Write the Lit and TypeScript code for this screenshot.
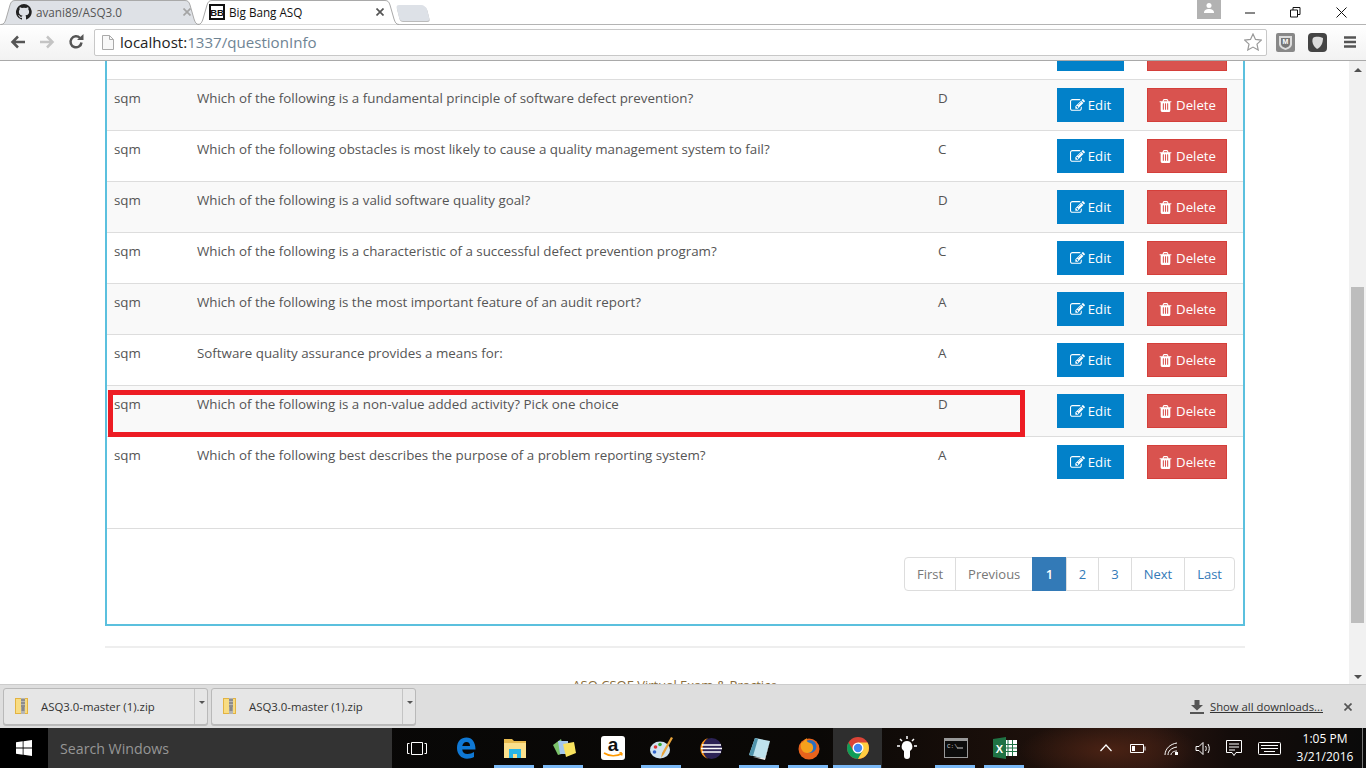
import { LitElement, css, html, svg } from "lit";
import { customElement } from "lit/decorators.js";

const ROWS = [
  ["", "", ""],
  ["sqm", "Which of the following is a fundamental principle of software defect prevention?", "D"],
  ["sqm", "Which of the following obstacles is most likely to cause a quality management system to fail?", "C"],
  ["sqm", "Which of the following is a valid software quality goal?", "D"],
  ["sqm", "Which of the following is a characteristic of a successful defect prevention program?", "C"],
  ["sqm", "Which of the following is the most important feature of an audit report?", "A"],
  ["sqm", "Software quality assurance provides a means for:", "A"],
  ["sqm", "Which of the following is a non-value added activity? Pick one choice", "D"],
  ["sqm", "Which of the following best describes the purpose of a problem reporting system?", "A"],
];

// font awesome pencil-square-o and trash
const editIcon = svg`<svg width="15" height="15" viewBox="0 0 1792 1792"><path fill="currentColor" d="M888 1184l116-116-152-152-116 116v56h96v96h56zm440-720q-16-16-33 1l-350 350q-17 17-1 33t33-1l350-350q17-17 1-33zm80 594v190q0 119-84.5 203.5t-203.5 84.5h-832q-119 0-203.5-84.5t-84.5-203.5v-832q0-119 84.5-203.5t203.5-84.5h832q63 0 117 25 15 7 18 23 3 17-9 29l-49 49q-14 14-32 8-23-6-45-6h-832q-66 0-113 47t-47 113v832q0 66 47 113t113 47h832q66 0 113-47t47-113v-126q0-13 9-22l64-64q15-15 35-7t20 29zm-96-738l288 288-672 672h-288v-288zm444 132l-92 92-288-288 92-92q28-28 68-28t68 28l152 152q28 28 28 68t-28 68z"/></svg>`;
const trashIcon = svg`<svg width="15" height="15" viewBox="0 0 1792 1792"><path fill="currentColor" d="M704 1376v-704q0-14-9-23t-23-9h-64q-14 0-23 9t-9 23v704q0 14 9 23t23 9h64q14 0 23-9t9-23zm256 0v-704q0-14-9-23t-23-9h-64q-14 0-23 9t-9 23v704q0 14 9 23t23 9h64q14 0 23-9t9-23zm256 0v-704q0-14-9-23t-23-9h-64q-14 0-23 9t-9 23v704q0 14 9 23t23 9h64q14 0 23-9t9-23zm-544-992h448l-48-117q-7-9-17-11h-317q-10 2-17 11zm928 32v64q0 14-9 23t-23 9h-96v948q0 83-47 143.5t-113 60.5h-832q-66 0-113-58.5t-47-141.5v-952h-96q-14 0-23-9t-9-23v-64q0-14 9-23t23-9h309l70-167q15-37 54-63t79-26h320q40 0 79 26t54 63l70 167h309q14 0 23 9t9 23z"/></svg>`;

const TASK_ICONS = [
  svg`<svg width="20" height="22" viewBox="0 0 20 22"><path d="M1 11C1 4.500 5 .5 10.500 .5 16 .5 19.500 5 19.500 12.500H6.200c.3 3 2.500 4.500 5.300 4.500 2.500 0 4.700-.8 6.500-2v5c-2 1.200-4.300 1.700-7 1.700C5 21.700 1 17 1 11zM6.300 9h7.700c0-2.500-1.200-4-3.500-4C8 5 6.700 6.700 6.300 9z" fill="#0f78d4" fill-rule="evenodd"/></svg>`,
  svg`<svg width="22" height="20" viewBox="0 0 22 20"><path d="M0 1h8l2 2h12v16H0z" fill="#e8bb4f"/><rect x="0" y="5" width="22" height="15" fill="#fbe08c"/><path d="M5 11h12v9h-4v-4H9v4H5z" fill="#29b6e8"/></svg>`,
  svg`<svg width="24" height="22" viewBox="0 0 24 22"><path d="M1 8l8-6 4 14-7 2z" fill="#7cc36a"/><path d="M6 4h10l1 13H8z" fill="#a5c8ec"/><path d="M11 7l11-2 2 11-10 4z" fill="#f8e25f"/></svg>`,
  html`<svg width="24" height="24" viewBox="0 0 24 24"><rect width="24" height="24" rx="3" fill="#fff"/><text x="12" y="15" font-size="19" font-family="Liberation Sans" font-weight="700" text-anchor="middle" fill="#111">a</text><path d="M3 17c5 3.500 13 3.500 18 .5M21 17l-2.500-.2M21 17l-.5 2.500" fill="none" stroke="#f90" stroke-width="1.600"/></svg>`,
  svg`<svg width="24" height="24" viewBox="0 0 24 24"><ellipse cx="10" cy="14" rx="10" ry="8.500" fill="#cfe3f1"/><circle cx="5.500" cy="11" r="1.800" fill="#d33"/><circle cx="10" cy="8.500" r="1.800" fill="#3a3"/><circle cx="4.500" cy="16" r="1.800" fill="#36c"/><path d="M21 1l2 1-9 16-3 4 1-5z" fill="#e8a33a"/></svg>`,
  svg`<svg width="23" height="23" viewBox="0 0 23 23"><circle cx="12.500" cy="11.500" r="10.500" fill="#2c2255"/><path d="M9 1A11 11 0 0 0 9 22 13 13 0 0 1 9 1z" fill="#f7941e"/><path d="M3 8h19M2 11.500h21M3 15h19" stroke="#fff" stroke-width="1.400"/></svg>`,
  svg`<svg width="23" height="23" viewBox="0 0 23 23"><path d="M7 1l15 3-5 18L1 18z" fill="#bfe3ee"/><path d="M1 18L7 1l3 1-5 17z" fill="#4f93ab"/><path d="M5 20l12 3 5-19-5 17z" fill="#e8e8e8"/></svg>`,
  svg`<svg width="22" height="23" viewBox="0 0 22 23"><circle cx="11" cy="12" r="10.500" fill="#e8631c"/><circle cx="12" cy="9.500" r="6.500" fill="#2a6fc0"/><path d="M3 6c2 0 3-3 6-5-1 3 0 4 3 5 4 1 4 7 1 9-3 2-8 1-9-2C2 10 3 8 3 6z" fill="#f6a11c"/></svg>`,
  svg`<svg width="22" height="22" viewBox="0 0 20 20"><circle cx="10" cy="10" r="10" fill="#db4437"/><path d="M1.340 5A10 10 0 0 0 10 20L14 13H6z" fill="#0f9d58"/><path d="M10 20A10 10 0 0 0 18.660 5H10l4 8z" fill="#ffcd40"/><circle cx="10" cy="10" r="5" fill="#fff"/><circle cx="10" cy="10" r="3.800" fill="#4285f4"/></svg>`,
  svg`<svg width="22" height="24" viewBox="0 0 22 24" fill="#fff"><path d="M11 5a5.500 5.500 0 0 1 3 10v5a3 3 0 0 1-6 0v-5a5.500 5.500 0 0 1 3-10z"/><path d="M11 0v3M4 3l2 2M18 3l-2 2M1 10h3M18 10h3" stroke="#fff" stroke-width="1.500"/></svg>`,
  svg`<svg width="24" height="20" viewBox="0 0 24 20"><rect x=".5" y=".5" width="23" height="19" fill="#0c0c0c" stroke="#999"/><rect x="1" y="1" width="22" height="2" fill="#999"/><text x="3" y="10" font-size="6" font-family="Liberation Mono" fill="#ccc">C:\\</text><path d="M13 10h6" stroke="#ccc"/></svg>`,
  html`<svg width="24" height="22" viewBox="0 0 24 22"><rect x="10" y="3" width="14" height="16" fill="#fff"/><path d="M11 7.500h13M11 11h13M11 14.500h13M15 3v16M19.500 3v16" stroke="#1f7244"/><path d="M0 2L13 0v22L0 20z" fill="#1f7244"/><text x="6.500" y="15.500" font-size="11" font-family="Liberation Sans" font-weight="700" text-anchor="middle" fill="#fff">X</text></svg>`,
];

@customElement("app-root")
export class AppRoot extends LitElement {
  static styles = css`
    :host {
      display: flex;
      flex-direction: column;
      width: 1366px;
      height: 768px;
      overflow: hidden;
      font-family: "Open Sans", "Noto Sans", sans-serif;
      color: #333;
      background: #fff;
    }
    svg { display: block; flex: none; }

    /* browser chrome */
    .tabstrip { height: 24px; display: flex; background: #fff; position: relative; z-index: 2; flex: none; }
    .tab {
      position: relative; height: 24px; box-sizing: border-box; display: flex; align-items: center;
      font-size: 11.7px; color: #555; width: 200px; padding: 0 9px 0 16px;
    }
    .tab > * { position: relative; }
    .tab > .shape { position: absolute; left: 0; top: 0; }
    .tab.active { color: #111; width: 203px; height: 25px; margin-left: -3px; padding: 0 16px 1px 12px; }
    .tab .title { flex: 1; margin-left: 4px; }
    .newtab { width: 30px; height: 16px; margin: 5px 0 0 -2px; background: #dde1e7; border-radius: 3px 5px 3px 3px; transform: skewX(14deg); box-shadow: 0 1px 0 #bbb; }
    .win { margin-left: auto; display: flex; align-items: flex-start; padding-right: 2px; }
    .user { width: 24px; height: 19px; background: #b2b2b2; margin-right: 7px; display: flex; justify-content: center; padding-top: 2px; box-sizing: border-box; }
    .wbtn { width: 45.5px; height: 24px; display: flex; align-items: center; justify-content: center; }
    .toolbar {
      height: 37px; flex: none; box-sizing: border-box; display: flex; align-items: center; padding: 0 0 1px 3px;
      background: linear-gradient(#fff, #f2f2f2); border-top: 1px solid #b4b4b4; border-bottom: 1px solid #a9a9a9;
    }
    .nav { width: 29px; display: flex; justify-content: center; }
    .omni {
      width: 1173px; height: 27px; box-sizing: border-box; background: #fff; border: 1px solid #c8c8c8; border-radius: 2px;
      display: flex; align-items: center; padding: 0 4px 0 7px; margin-left: 4px;
      font-size: 15.1px; color: #6f8494;
    }
    .omni b { font-weight: 400; color: #222; }
    .omni .page { margin-right: 6px; }
    .omni .star { margin-left: auto; }
    .ext { width: 32px; display: flex; justify-content: center; }
    .ext.first { margin-left: 2.5px; }

    /* page */
    .viewport { flex: 1; min-height: 0; display: flex; overflow: hidden; }
    .page-area { flex: 1; overflow: hidden; }
    .scrolled { margin: -234px 0 0 105px; width: 1140px; font-size: 13.35px; }
    .panel { border: 2px solid #5bc0de; height: 799px; box-sizing: border-box; padding-top: 200px; }
    .row {
      display: grid; grid-template-columns: 83px 741px 119px 90px 1fr; height: 51px; box-sizing: border-box;
      border-bottom: 1px solid #ddd; padding: 8px 0 0 7px; line-height: 20px; position: relative; color: #555;
    }
    .row:nth-child(even) { background: #f9f9f9; }
    .row.plain { height: 92px; }
    .highlight { position: absolute; left: 1px; top: 4px; width: 907px; height: 37px; border: 5px solid #ed1c24; pointer-events: none; }
    .btn {
      height: 34px; box-sizing: border-box; display: flex; align-items: center; justify-content: center; gap: 3px;
      color: #fff; font-size: 13.2px; border: 1px solid;
    }
    .btn.edit { width: 67px; background: #0281c9; border-color: #0281c9; }
    .btn.del { width: 80px; background: #d9534f; border-color: #d43f3a; }
    .pager-wrap { display: flex; justify-content: flex-end; padding: 28px 8px 0 0; }
    .pager { display: flex; height: 34px; box-sizing: border-box; font-size: 13px; line-height: 32px; }
    .pager span { border: 1px solid #ddd; margin-left: -1px; padding: 0 12px; color: #337ab7; background: #fff; }
    .pager span.off { color: #777; }
    .pager span.on { background: #337ab7; border-color: #337ab7; color: #fff; font-weight: 600; padding: 0 12.5px; }
    .pager span:first-child { border-radius: 4px 0 0 4px; }
    .pager span:last-child { border-radius: 0 4px 4px 0; }
    .rule { border-top: 2px solid #eee; margin-top: 20px; }
    .foot { text-align: center; margin-top: 28px; font-size: 13px; color: #8a6d3b; }

    .scrollbar { width: 17px; flex: none; background: #f1f1f1; display: flex; flex-direction: column; align-items: center; }
    .arrow { width: 0; height: 0; border: 4px solid transparent; border-bottom: 4px solid #505050; border-top: 0; margin-top: 7px; }
    .arrow.down { border-top: 4px solid #505050; border-bottom: 0; margin: auto 0 5px; }
    .thumb { width: 13px; height: 336px; background: #bdbdbd; margin-top: 215px; }

    /* downloads */
    .downloads {
      height: 44px; flex: none; box-sizing: border-box; background: #dedede; border-top: 1px solid #ccc;
      display: flex; align-items: center; padding: 0 14px 0 3px; gap: 3px; font-size: 11.4px; color: #333;
    }
    .dl {
      width: 205px; height: 37px; box-sizing: border-box; border: 1px solid #b9b9b9; border-radius: 3px; background: #e6e6e6;
      display: grid; grid-template-columns: 191px 1fr; box-shadow: 0 1px 0 #bbb;
    }
    .dl .name { display: flex; align-items: center; padding-left: 11px; gap: 12px; border-right: 1px solid #c4c4c4; }
    .dl .caret { width: 0; height: 0; border: 3px solid transparent; border-top: 3px solid #555; border-bottom: 0; margin: 12px 0 0 4px; }
    .all { margin-left: auto; display: flex; align-items: center; gap: 6px; text-decoration: underline; color: #333; font-size: 11.3px; }
    .x { margin-left: 18px; }

    /* taskbar */
    .taskbar {
      height: 40px; flex: none; display: flex; align-items: center; color: #fff; position: relative;
      background:
        radial-gradient(ellipse 90px 30px at 1110px 22px, #4a2214 0, rgba(74, 34, 20, 0) 100%),
        linear-gradient(90deg, #070707 0, #0a0806 60%, #1d100b 76%, #2a1610 84%, #140c0a 90%, #0a0a0a 100%);
    }
    .start { width: 48px; height: 40px; background: #000; display: flex; align-items: center; justify-content: center; }
    .search {
      width: 344px; height: 40px; box-sizing: border-box; background: #333; color: #969696; padding-left: 12px;
      display: flex; align-items: center; font-size: 14.2px;
    }
    .tasks { display: flex; height: 40px; }
    .task { width: 49px; height: 40px; position: relative; display: flex; align-items: center; justify-content: center; box-sizing: border-box; }
    .task.open::after { content: ""; position: absolute; left: 4px; right: 5px; bottom: 0; height: 3px; background: #7ab8f5; }
    .task.current { background: #2e2e2e; }
    .task.current::after { left: 0; right: 1px; }
    .tray { display: grid; grid-template-columns: 32px 32px 34px 29px 33px 38px 74px; align-items: center; justify-items: center; margin-left: auto; margin-right: 3px; border-right: 1px solid #777; height: 40px; }
    .clock { text-align: center; font-size: 12px; line-height: 18px; color: #fff; }
  `;

  private zipIcon() {
    return svg`<svg width="14" height="17" viewBox="0 0 14 17"><rect x=".5" y=".5" width="12" height="15" fill="#f8dc82" stroke="#e3b341"/><rect x="6" y="0" width="4" height="16" fill="#b5b5b5"/><path d="M6 2h4M6 5h4M6 8h4" stroke="#666"/><rect x="6.500" y="9" width="3" height="4" fill="#888"/></svg>`;
  }

  private tabShape(w: number, fill: string) {
    return svg`<svg class="shape" width="${w}" height="25" viewBox="0 0 ${w} 25"><path d="M1 24.500C4 24.500 5 22 6 19L10 5C11 2 12 .5 15 .5H${w - 15}C${w - 12} .5 ${w - 11} 2 ${w - 10} 5L${w - 6} 19C${w - 5} 22 ${w - 4} 24.500 ${w - 1} 24.500" fill="${fill}" stroke="#a9a9a9"/></svg>`;
  }

  private closeIcon(color: string) {
    return svg`<svg width="8" height="8" viewBox="0 0 8 8"><path d="M.5.500l7 7M7.500.5l-7 7" stroke="${color}" stroke-width="1.700"/></svg>`;
  }

  render() {
    const open = [1, 2, 4, 6, 7, 8, 10, 11];
    return html`
      <div class="tabstrip">
        <div class="tab">
          ${this.tabShape(200, "#dee1e6")}
          <svg width="16" height="16" viewBox="0 0 16 16"><path fill="#222" d="M8 0a8 8 0 0 0-2.500 15.600c.4.100.5-.2.500-.4v-1.400c-2.200.5-2.700-1-2.700-1-.4-.9-.9-1.200-.9-1.200-.7-.5.100-.5.100-.5.800.1 1.200.8 1.200.8.700 1.200 1.900.9 2.300.7.100-.5.300-.9.500-1.100-1.800-.2-3.600-.9-3.600-4 0-.9.300-1.600.8-2.100-.1-.2-.4-1 .1-2.100 0 0 .7-.2 2.200.8a7.600 7.600 0 0 1 4 0c1.500-1 2.200-.8 2.200-.8.400 1.100.2 1.900.1 2.100.5.600.8 1.300.8 2.100 0 3.100-1.900 3.700-3.700 3.900.3.300.6.800.6 1.500v2.200c0 .2.100.5.500.4A8 8 0 0 0 8 0z"/></svg>
          <span class="title">avani89/ASQ3.0</span>${this.closeIcon("#a4a4a4")}
        </div>
        <div class="tab active">
          ${this.tabShape(203, "#fff")}
          <svg width="16" height="16" viewBox="0 0 16 16"><rect x="1" y="1" width="14" height="14" fill="#fff" stroke="#111" stroke-width="2"/><text x="8" y="11.700" font-size="9.500" font-family="Liberation Sans" font-weight="700" text-anchor="middle" fill="#111">BB</text></svg>
          <span class="title">Big Bang ASQ</span>${this.closeIcon("#555")}
        </div>
        <div class="newtab"></div>
        <div class="win">
          <div class="user"><svg width="12" height="12" viewBox="0 0 12 12" fill="#fff"><circle cx="6" cy="3.500" r="2.500"/><path d="M1 11c0-3 2-4 5-4s5 1 5 4z"/></svg></div>
          <div class="wbtn"><svg width="11" height="11" viewBox="0 0 11 11"><path d="M0 6h10" stroke="#111"/></svg></div>
          <div class="wbtn"><svg width="11" height="11" viewBox="0 0 11 11"><path d="M.5 3h7v7h-7zM3 3V.5h7v7H7.500" fill="none" stroke="#111"/></svg></div>
          <div class="wbtn"><svg width="11" height="11" viewBox="0 0 11 11"><path d="M.5.500l10 10M10.500.5l-10 10" stroke="#111"/></svg></div>
        </div>
      </div>
      <div class="toolbar">
        <div class="nav"><svg width="16" height="14" viewBox="0 0 16 14"><path d="M15 7H3M8 1.500 2.500 7 8 12.500" fill="none" stroke="#555" stroke-width="2.500"/></svg></div>
        <div class="nav"><svg width="16" height="14" viewBox="0 0 16 14"><path d="M1 7h12M8 1.500 13.500 7 8 12.500" fill="none" stroke="#c4c4c4" stroke-width="2.500"/></svg></div>
        <div class="nav"><svg width="16" height="16" viewBox="0 0 16 16"><path d="M13.500 8.500A5.500 5.500 0 1 1 12 4" fill="none" stroke="#555" stroke-width="2.500"/><path d="M9 6h6.500V0z" fill="#555"/></svg></div>
        <div class="omni">
          <svg class="page" width="12" height="15" viewBox="0 0 12 15"><path d="M.5.500h7l4 4v10H.5z" fill="#f8f8f8" stroke="#aaa"/><path d="M7.500.5v4h4" fill="none" stroke="#aaa"/></svg>
          <b>localhost:</b>1337/questionInfo
          <svg class="star" width="18" height="18" viewBox="0 0 18 18"><path d="M9 1l2.500 5.400 5.800.7-4.300 4 1.200 5.900L9 14.100 3.800 17 5 11.100l-4.300-4 5.800-.7z" fill="#fff" stroke="#999" stroke-width="1.200"/></svg>
        </div>
        <div class="ext first"><svg width="19" height="19" viewBox="0 0 19 19"><rect width="19" height="19" rx="2" fill="#888"/><path d="M3 3h13v8c0 3-3 5-6.500 6C6 16 3 14 3 11z" fill="#ddd"/><path d="M5 5h9v6c0 2-2 3-4.500 4C7 14 5 13 5 11z" fill="#777"/><text x="9.500" y="11" font-size="7" font-family="Liberation Sans" font-weight="700" text-anchor="middle" fill="#fff">M</text></svg></div>
        <div class="ext"><svg width="19" height="19" viewBox="0 0 19 19"><rect width="19" height="19" rx="4" fill="#444"/><path d="M5 5c3-2 7-1 10 0 0 5-2 9-6 11C6 14 3 9 5 5z" fill="#ddd"/></svg></div>
        <div class="ext"><svg width="14" height="14" viewBox="0 0 14 14"><path d="M1 2.500h12M1 7h12M1 11.500h12" stroke="#555" stroke-width="2.500"/></svg></div>
      </div>
      <div class="viewport">
        <div class="page-area">
          <div class="scrolled">
            <div class="panel">
              <div class="rows">
                ${ROWS.map((r, i) => html`
                  <div class="row ${i === ROWS.length - 1 ? "plain" : ""}">
                    <span>${r[0]}</span><span>${r[1]}</span><span>${r[2]}</span>
                    <span class="btn edit">${editIcon}Edit</span>
                    <span class="btn del">${trashIcon}Delete</span>
                    ${i === 7 ? html`<div class="highlight"></div>` : ""}
                  </div>`)}
              </div>
              <div class="pager-wrap">
                <div class="pager">
                  <span class="off">First</span><span class="off">Previous</span><span class="on">1</span><span>2</span><span>3</span><span>Next</span><span>Last</span>
                </div>
              </div>
            </div>
            <div class="rule"></div>
            <div class="foot">ASQ CSQE Virtual Exam &amp; Practice</div>
          </div>
        </div>
        <div class="scrollbar"><div class="arrow"></div><div class="thumb"></div><div class="arrow down"></div></div>
      </div>
      <div class="downloads">
        ${[0, 1].map(() => html`<div class="dl"><div class="name">${this.zipIcon()}<span>ASQ3.0-master (1).zip</span></div><div><div class="caret"></div></div></div>`)}
        <div class="all"><svg width="14" height="14" viewBox="0 0 14 14"><path d="M4.500 0h5v5H13L7 10.500 1 5h3.500zM0 12h14v2H0z" fill="#555"/></svg>Show all downloads...</div>
        <svg class="x" width="8" height="8" viewBox="0 0 8 8"><path d="M.5.500l7 7M7.500.5l-7 7" stroke="#555" stroke-width="1.700"/></svg>
      </div>
      <div class="taskbar">
        <div class="start"><svg width="16" height="16" viewBox="0 0 16 16" fill="#fff"><path d="M0 2.300 6.700 1.300V7.500H0zM7.500 1.200 16 0V7.500H7.500zM0 8.400H6.700V14.700L0 13.700zM7.500 8.400H16V16L7.500 14.800z"/></svg></div>
        <div class="search">Search Windows</div>
        <div class="task"><svg width="20" height="13" viewBox="0 0 20 13" fill="none" stroke="#fff"><path d="M4.500.5h11v12h-11zM2.500 1.500H.5v10h2M17.500 1.500h2v10h-2"/></svg></div>
        <div class="tasks">
          ${TASK_ICONS.map((icon, i) => html`<div class="task ${open.includes(i) ? "open" : ""} ${i === 8 ? "current" : ""}">${icon}</div>`)}
        </div>
        <div class="tray">
          <svg width="12" height="8" viewBox="0 0 12 8"><path d="M.5 7l5.500-6 5.500 6" fill="none" stroke="#fff" stroke-width="1.200"/></svg>
          <svg width="16" height="9" viewBox="0 0 16 9" fill="none" stroke="#fff"><path d="M.5.500h13v8H.5zM15 2.500v4"/><rect x="2" y="2" width="3" height="5" fill="#fff" stroke="none"/></svg>
          <svg width="14" height="13" viewBox="0 0 14 13" fill="none" stroke="#fff"><path d="M1 13C1 7 6 2 13 1M4 13c0-4 3-7 9-8M7 13c0-2 2-4 6-4"/><rect x="11" y="10" width="3" height="3" fill="#fff" stroke="none"/></svg>
          <svg width="16" height="13" viewBox="0 0 16 13" fill="none" stroke="#fff"><path d="M1 4.500h3l4-4v12l-4-4H1zM10.500 4c1 1.500 1 3.500 0 5M13 2c1.700 3 1.700 6 0 9"/></svg>
          <svg width="16" height="17" viewBox="0 0 16 17" fill="none" stroke="#fff"><path d="M.5.500h15v12H10l-2 3-2-3H.5zM3 4h10M3 7h10M3 10h6"/></svg>
          <svg width="23" height="13" viewBox="0 0 23 13" fill="none" stroke="#fff"><path d="M1.500.5h20a1 1 0 0 1 1 1v10a1 1 0 0 1-1 1h-20a1 1 0 0 1-1-1v-10a1 1 0 0 1 1-1zM3 3.500h17M3 6.500h17M6 9.500h11" /></svg>
          <div class="clock">1:05 PM<br />3/21/2016</div>
        </div>
      </div>
    `;
  }
}
